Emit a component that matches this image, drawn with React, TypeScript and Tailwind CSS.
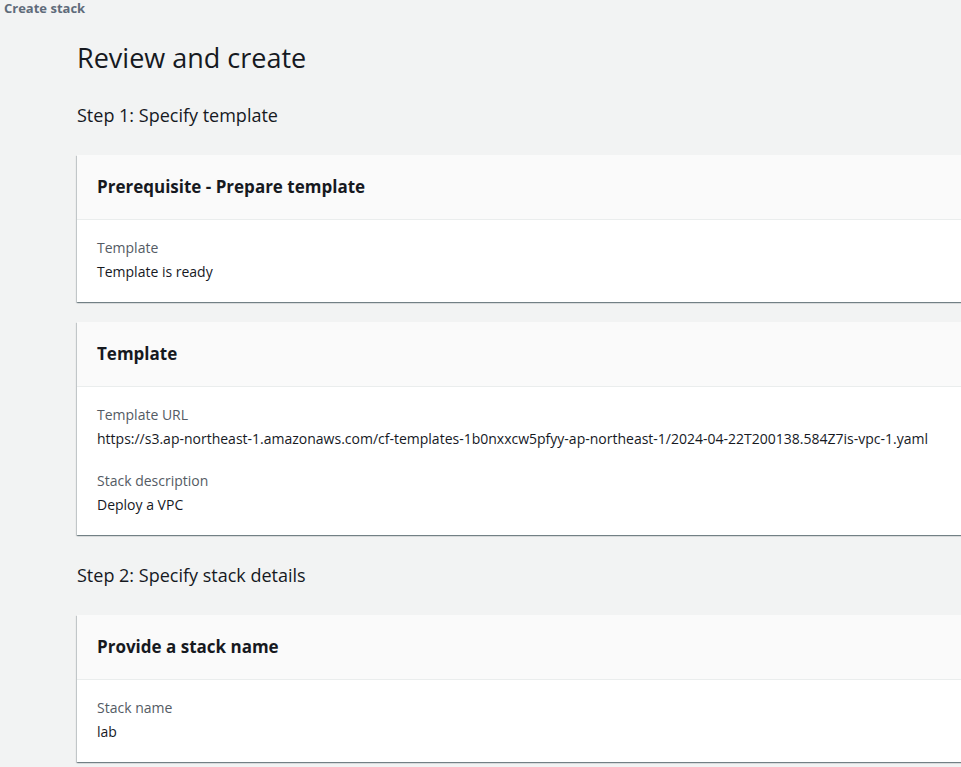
import React from 'react';

type Field = { label: string; value: string };

const Card: React.FC<{ title: string; fields: Field[] }> = ({ title, fields }) => (
    <div className="bg-white shadow-[0_1px_1px_0_rgba(0,28,36,0.35),1px_1px_1px_0_rgba(0,28,36,0.15),-1px_1px_1px_0_rgba(0,28,36,0.15)]">
        <div className="h-[65px] flex items-center px-5 bg-[#fafafa] border-b border-[#eaeded]">
            <h3 className="text-[17px] font-bold text-[#16191f]">{title}</h3>
        </div>
        <div className="px-5 pt-[17px] pb-[19px] flex flex-col gap-5">
            {fields.map((f, i) => (
                <div key={i} className="flex flex-col gap-[2px]">
                    <div className="text-[14px] leading-[22px] text-[#545b64]">{f.label}</div>
                    <div className="text-[14px] leading-[22px] text-[#16191f] whitespace-nowrap">{f.value}</div>
                </div>
            ))}
        </div>
    </div>
);

const App: React.FC = () => {
    return (
        <div className="min-h-[767px] bg-[#f2f3f3] overflow-hidden" style={{ fontFamily: '"Open Sans", Arial, sans-serif' }}>
            <div className="px-1 text-[13px] leading-[16px] font-bold text-[#5f6b7a]">Create stack</div>
            <div className="pl-[77px] w-[1040px]">
                <h1 className="mt-[24px] text-[27px] leading-[36px] text-[#16191f]">Review and create</h1>
                <h2 className="mt-[26px] text-[18px] leading-[26px] text-[#16191f]">Step 1: Specify template</h2>
                <div className="mt-[27px] flex flex-col gap-[20px]">
                    <Card title="Prerequisite - Prepare template" fields={[{ label: 'Template', value: 'Template is ready' }]} />
                    <Card
                        title="Template"
                        fields={[
                            { label: 'Template URL', value: 'https://s3.ap-northeast-1.amazonaws.com/cf-templates-1b0nxxcw5pfyy-ap-northeast-1/2024-04-22T200138.584Z7is-vpc-1.yaml' },
                            { label: 'Stack description', value: 'Deploy a VPC' },
                        ]}
                    />
                </div>
                <h2 className="mt-[27px] text-[18px] leading-[26px] text-[#16191f]">Step 2: Specify stack details</h2>
                <div className="mt-[27px]">
                    <Card title="Provide a stack name" fields={[{ label: 'Stack name', value: 'lab' }]} />
                </div>
            </div>
        </div>
    );
};

export default App;
